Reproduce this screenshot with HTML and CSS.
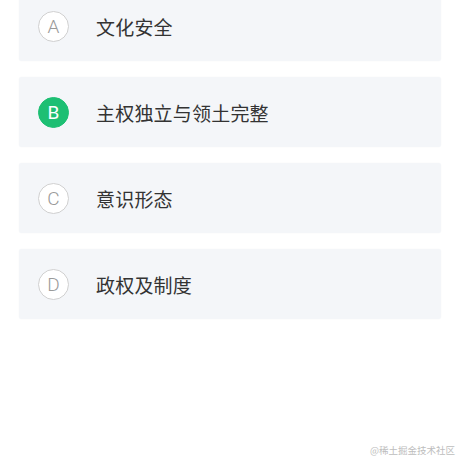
FILE: index.html
```html
<!DOCTYPE html>
<html lang="zh">
<head>
<meta charset="utf-8">
<link rel="stylesheet" href="styles.css">
</head>
<body>
<div class="list">
  <div class="option"><span class="letter">A</span><span class="label">文化安全</span></div>
  <div class="option"><span class="letter active">B</span><span class="label">主权独立与领土完整</span></div>
  <div class="option"><span class="letter">C</span><span class="label">意识形态</span></div>
  <div class="option"><span class="letter">D</span><span class="label">政权及制度</span></div>
</div>
<div class="watermark">@稀土掘金技术社区</div>
</body>
</html>
```
FILE: styles.css
```css
html, body {
  margin: 0;
  padding: 0;
  background: #ffffff;
  width: 460px;
  height: 460px;
  overflow: hidden;
  position: relative;
  font-family: "Noto Sans CJK SC", "Noto Sans", sans-serif;
}
.list {
  display: flex;
  flex-direction: column;
  gap: 16px;
  padding: 0 19px;
  margin-top: -9px;
}
.option {
  height: 70px;
  background: #f4f6f9;
  border-radius: 2px;
  box-shadow: 0 0 2px rgba(0, 0, 0, 0.03);
  display: flex;
  align-items: center;
  padding-left: 19px;
}
.letter {
  width: 29px;
  height: 29px;
  border: 1px solid #d0d0d0;
  border-radius: 50%;
  display: flex;
  align-items: center;
  justify-content: center;
  font-family: "Roboto", "Noto Sans", sans-serif;
  font-weight: 300;
  font-size: 19px;
  color: #9a9a9a;
  background: #ffffff;
  flex: none;
}
.letter.active {
  background: #1dbf73;
  border-color: #1dbf73;
  color: #ffffff;
  font-weight: 400;
}
.label {
  margin-left: 27px;
  font-size: 19px;
  color: #333333;
  letter-spacing: 0.2px;
}
.watermark {
  position: absolute;
  right: 5px;
  bottom: 3px;
  font-size: 9.5px;
  color: #bdbdbd;
}
```
